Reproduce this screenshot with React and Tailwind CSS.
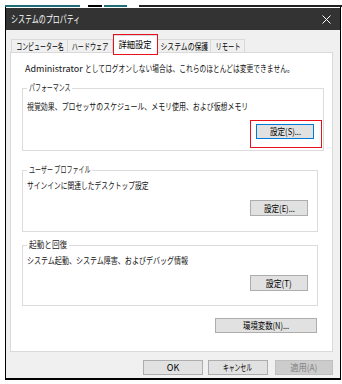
import React from "react";

function S({ s = "", o = "origin-center", children }) {
  return (
    <span className={"inline-block whitespace-nowrap " + s + " " + o}>
      {children}
    </span>
  );
}

function Btn({ children, className = "" }) {
  return (
    <div
      className={
        "h-[15px] flex items-center justify-center whitespace-nowrap border border-[#adadad] bg-[#e1e1e1] text-[9px] leading-none text-black " +
        className
      }
    >
      {children}
    </div>
  );
}

function Group({ legend, className = "", children }) {
  return (
    <fieldset
      className={
        "border border-[#dcdcdc] px-[4px] pr-[9px] flex flex-col " + className
      }
    >
      {legend}
      {children}
    </fieldset>
  );
}

const tab =
  "h-[13px] border border-b-0 border-[#d9d9d9] bg-[#f0f0f0] flex items-center justify-center whitespace-nowrap text-[9px] leading-none";

const legendCls = "px-[2px] text-[9px] leading-[10px] text-[#1a1a1a] whitespace-nowrap";
const descCls = "text-[9px] leading-[12px] whitespace-nowrap text-[#111]";

export default function App() {
  return (
    <div className="w-[342px] h-[384px] bg-white overflow-hidden font-['Noto_Sans_CJK_JP','Noto_Sans',sans-serif] text-black">
      <div className="h-[5px]" />
      <div className="flex h-[2px]">
        <div className="ml-[5px] w-[75px] bg-[#1f6d75]" />
        <div className="ml-[8px] w-[14px] bg-black" />
        <div className="ml-[2px] w-[23px] bg-[#1f6d75]" />
        <div className="ml-[12px] w-[204px] bg-[#222]" />
      </div>
      <div className="ml-[5px] w-[336px] h-[373px] border-x border-b-2 border-black flex flex-col">
        <div className="h-px bg-white" />
        <div className="h-[22px] bg-[#333333] flex items-center justify-between pl-[5px] pr-[8px]">
          <span className="text-[10px] leading-none text-white">
            <S s="scale-x-[0.7]" o="origin-left">システムのプロパティ</S>
          </span>
          <svg width="9" height="9" viewBox="0 0 9 9" className="mr-[1px]">
            <path d="M0.5 0.5 L8.5 8.5 M8.5 0.5 L0.5 8.5" stroke="#ffffff" strokeWidth="1" />
          </svg>
        </div>
        <div className="flex-1 bg-[#f0f0f0] pl-[4px] pr-[7px] pt-[5px] flex flex-col">
          {/* tabs */}
          <div className="flex items-end h-[17px] pl-[1px] relative z-10">
            <div className={tab + " w-[57px]"}>
              <S s="scale-x-[0.66]">コンピューター名</S>
            </div>
            <div className={tab + " w-[45px] border-l-0"}>
              <S s="scale-x-[0.68]">ハードウェア</S>
            </div>
            <div className="relative w-[45px] h-[18px] -mb-px border border-b-0 border-[#d9d9d9] bg-white flex items-center justify-center whitespace-nowrap text-[9px] leading-none">
              <S s="scale-x-[0.92]">詳細設定</S>
              <div className="absolute -left-px -right-px -top-[2px] -bottom-[2px] border-[1.5px] border-[#e8101a]" />
            </div>
            <div className={tab + " w-[53px] border-l-0"}>
              <S s="scale-x-[0.76]">システムの保護</S>
            </div>
            <div className={tab + " w-[34px] border-l-0"}>
              <S s="scale-x-[0.7]">リモート</S>
            </div>
          </div>
          {/* panel */}
          <div className="h-[300px] border border-[#d9d9d9] bg-white pl-[11px] pr-[14px] pt-[10px] flex flex-col">
            <div className={"pl-[3px] " + descCls}>
              Administrator{" "}
              <S s="scale-x-[0.75]" o="origin-left">
                としてログオンしない場合は、これらのほとんどは変更できません。
              </S>
            </div>
            <Group
              className="mt-[8px] h-[68px]"
              legend={
                <legend className={legendCls + " w-[45px]"}>
                  <S s="scale-x-[0.66]" o="origin-left">パフォーマンス</S>
                </legend>
              }
            >
              <div className={"mt-[8px] " + descCls}>
                <S s="scale-x-[0.77]" o="origin-left">
                  視覚効果、プロセッサのスケジュール、メモリ使用、および仮想メモリ
                </S>
              </div>
              <div className="mt-[11px] flex justify-end">
                <div className="relative">
                  <Btn className="w-[58px] !border-[#0078d7]">
                    <S s="scale-x-[0.84]">設定(S)...</S>
                  </Btn>
                  <div className="absolute -left-[6px] -right-[8px] -top-[4px] -bottom-[9px] border-[1.5px] border-[#e8101a]" />
                </div>
              </div>
            </Group>
            <Group
              className="mt-[14px] h-[67px]"
              legend={
                <legend className={legendCls + " w-[65px]"}>
                  <S s="scale-x-[0.67]" o="origin-left">ユーザー プロファイル</S>
                </legend>
              }
            >
              <div className={"mt-[5px] " + descCls}>
                <S s="scale-x-[0.75]" o="origin-left">
                  サインインに関連したデスクトップ設定
                </S>
              </div>
              <div className="mt-[8px] flex justify-end">
                <Btn className="w-[58px] h-[16px]">
                  <S s="scale-x-[0.84]">設定(E)...</S>
                </Btn>
              </div>
            </Group>
            <Group
              className="mt-[8px] h-[66px]"
              legend={
                <legend className={legendCls + " w-[42px]"}>
                  <S s="scale-x-[0.85]" o="origin-left">起動と回復</S>
                </legend>
              }
            >
              <div className={"mt-[5px] " + descCls}>
                <S s="scale-x-[0.78]" o="origin-left">
                  システム起動、システム障害、およびデバッグ情報
                </S>
              </div>
              <div className="mt-[8px] flex justify-end">
                <Btn className="w-[58px] h-[16px]">
                  <S s="scale-x-[0.88]">設定(T)</S>
                </Btn>
              </div>
            </Group>
            <div className="mt-[12px] flex justify-end pr-[1px]">
              <Btn className="w-[102px]">
                <S s="scale-x-[0.82]">環境変数(N)...</S>
              </Btn>
            </div>
          </div>
          {/* bottom buttons */}
          <div className="mt-[8px] flex justify-end">
            <Btn className="w-[60px]">OK</Btn>
            <Btn className="ml-[5px] w-[60px]">
              <S s="scale-x-[0.64]">キャンセル</S>
            </Btn>
            <Btn className="ml-[7px] w-[58px] !bg-[#cccccc] !border-[#bfbfbf] !text-[#838383]">
              <S s="scale-x-[0.92]">適用(A)</S>
            </Btn>
          </div>
        </div>
      </div>
    </div>
  );
}
